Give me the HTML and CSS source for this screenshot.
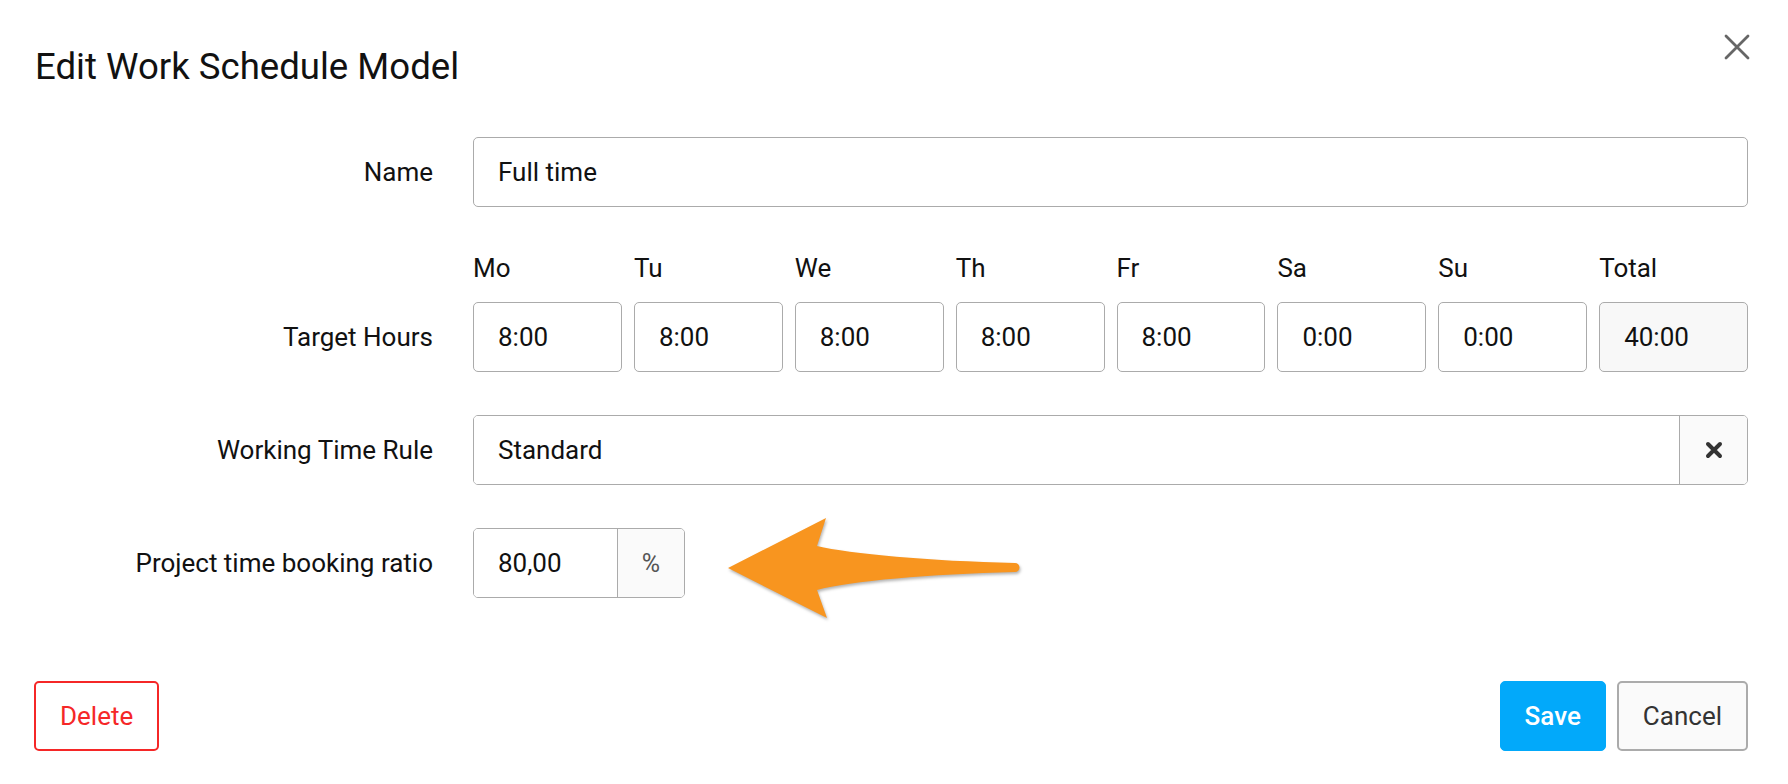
FILE: index.html
```html
<!DOCTYPE html>
<html lang="en">
<head>
<meta charset="utf-8">
<title>Edit Work Schedule Model</title>
<link rel="stylesheet" href="styles.css">
</head>
<body>
<div class="dialog">
  <header class="header">
    <h1 class="title">Edit Work Schedule Model</h1>
    <button class="close" type="button" aria-label="Close">
      <svg width="26" height="26" viewBox="0 0 26 26"><path d="M2 2 L24 24 M24 2 L2 24" stroke="#666" stroke-width="2.8" stroke-linecap="round" fill="none"/></svg>
    </button>
  </header>

  <form class="form">
    <div class="row">
      <label class="label" for="name">Name</label>
      <div class="field">
        <input id="name" class="input" type="text" value="Full time">
      </div>
    </div>

    <div class="row row-hours">
      <div class="label">Target Hours</div>
      <div class="days">
        <span class="day">Mo</span>
        <span class="day">Tu</span>
        <span class="day">We</span>
        <span class="day">Th</span>
        <span class="day">Fr</span>
        <span class="day">Sa</span>
        <span class="day">Su</span>
        <span class="day">Total</span>
        <input class="input" type="text" value="8:00">
        <input class="input" type="text" value="8:00">
        <input class="input" type="text" value="8:00">
        <input class="input" type="text" value="8:00">
        <input class="input" type="text" value="8:00">
        <input class="input" type="text" value="0:00">
        <input class="input" type="text" value="0:00">
        <input class="input input-readonly" type="text" value="40:00" readonly>
      </div>
    </div>

    <div class="row">
      <div class="label">Working Time Rule</div>
      <div class="group">
        <input class="group-input" type="text" value="Standard">
        <button class="clear" type="button" aria-label="Clear">
          <svg width="18" height="18" viewBox="0 0 18 18"><path d="M3 3 L15 15 M15 3 L3 15" stroke="#333" stroke-width="4" stroke-linecap="round" fill="none"/></svg>
        </button>
      </div>
    </div>

    <div class="row">
      <div class="label">Project time booking ratio</div>
      <div class="ratio-wrap">
        <div class="group group-ratio">
          <input class="group-input ratio-input" type="text" value="80,00">
          <span class="addon">%</span>
        </div>
        <svg class="arrow" width="340" height="140" viewBox="0 0 340 140">
          <path d="M28 67 L126 17 L117 45 C150 53 230 60 315 62 A4.5 4.5 0 0 1 315 71 C230 73 150 80 117 89 L127 117 Z" fill="#f8951f"/>
        </svg>
      </div>
    </div>
  </form>

  <footer class="footer">
    <button class="btn btn-delete" type="button">Delete</button>
    <div class="actions">
      <button class="btn btn-save" type="button">Save</button>
      <button class="btn btn-cancel" type="button">Cancel</button>
    </div>
  </footer>
</div>
</body>
</html>
```

FILE: styles.css
```css
* { box-sizing: border-box; }

html, body {
  margin: 0;
  padding: 0;
  background: #ffffff;
}

body {
  font-family: Roboto, "Liberation Sans", Arial, sans-serif;
  color: #111;
  font-size: 26px;
}

.dialog {
  width: 1788px;
  height: 784px;
  padding: 34px 40px 0 35px;
}

.header {
  display: flex;
  justify-content: space-between;
  align-items: flex-start;
}

.title {
  margin: 11px 0 0 0;
  font-size: 36.6px;
  line-height: 44px;
  font-weight: 400;
  color: #111;
}

.close {
  border: 0;
  background: none;
  padding: 0;
  margin: 0 -2px 0 0;
  width: 26px;
  height: 26px;
  display: flex;
}

.form {
  margin-top: 48px;
  display: flex;
  flex-direction: column;
  gap: 43px;
}

.row {
  display: grid;
  grid-template-columns: 398px 1fr;
  column-gap: 40px;
  align-items: center;
}

.row-hours {
  align-items: end;
}

.label {
  text-align: right;
  line-height: 70px;
  font-size: 26px;
  color: #111;
}

.field { display: flex; }

.input {
  width: 100%;
  height: 70px;
  border: 1.5px solid #ababab;
  border-radius: 5px;
  padding: 0 24px;
  font-family: Roboto, "Liberation Sans", Arial, sans-serif;
  font-size: 26px;
  color: #111;
  background: #fff;
  outline: none;
}

.input-readonly {
  background: #f8f8f8;
}

.days {
  display: grid;
  grid-template-columns: repeat(8, 1fr);
  column-gap: 12px;
  row-gap: 15px;
}

.day {
  line-height: 37px;
  font-size: 26px;
  color: #111;
}

.group {
  display: flex;
  height: 70px;
  border: 1.5px solid #ababab;
  border-radius: 5px;
  overflow: hidden;
  background: #fff;
}

.group-input {
  flex: 1;
  min-width: 0;
  border: 0;
  padding: 0 24px;
  font-family: Roboto, "Liberation Sans", Arial, sans-serif;
  font-size: 26px;
  color: #111;
  background: #fff;
  outline: none;
}

.clear {
  width: 68px;
  border: 0;
  border-left: 1.5px solid #ababab;
  background: #fafafa;
  display: flex;
  align-items: center;
  justify-content: center;
  padding: 0;
}

.ratio-wrap {
  position: relative;
  display: flex;
}

.group-ratio {
  width: 212px;
}

.ratio-input {
  width: 143px;
  flex: none;
}

.addon {
  flex: 1;
  border-left: 1.5px solid #ababab;
  background: #fafafa;
  display: flex;
  align-items: center;
  justify-content: center;
  font-size: 25px;
  color: #555;
}

.arrow {
  position: absolute;
  left: 227px;
  top: -27px;
  filter: drop-shadow(1px 2px 1.5px rgba(0, 0, 0, 0.3));
}

.footer {
  margin-top: 83px;
  display: flex;
  justify-content: space-between;
  align-items: center;
}

.actions {
  display: flex;
  gap: 11px;
}

.btn {
  height: 70px;
  padding: 0 24px;
  border-radius: 5px;
  font-family: Roboto, "Liberation Sans", Arial, sans-serif;
  font-size: 26px;
  cursor: pointer;
}

.btn-delete {
  margin-left: -1px;
  background: #fff;
  border: 2px solid #f52727;
  color: #f52727;
  font-weight: 400;
}

.btn-save {
  background: #02a9fa;
  border: 1.5px solid #02a9fa;
  color: #fff;
  font-weight: 500;
  padding: 0 24px;
}

.btn-cancel {
  background: #fafafa;
  border: 2px solid #ababab;
  color: #333;
  font-weight: 400;
  padding: 0 24px;
}
```
